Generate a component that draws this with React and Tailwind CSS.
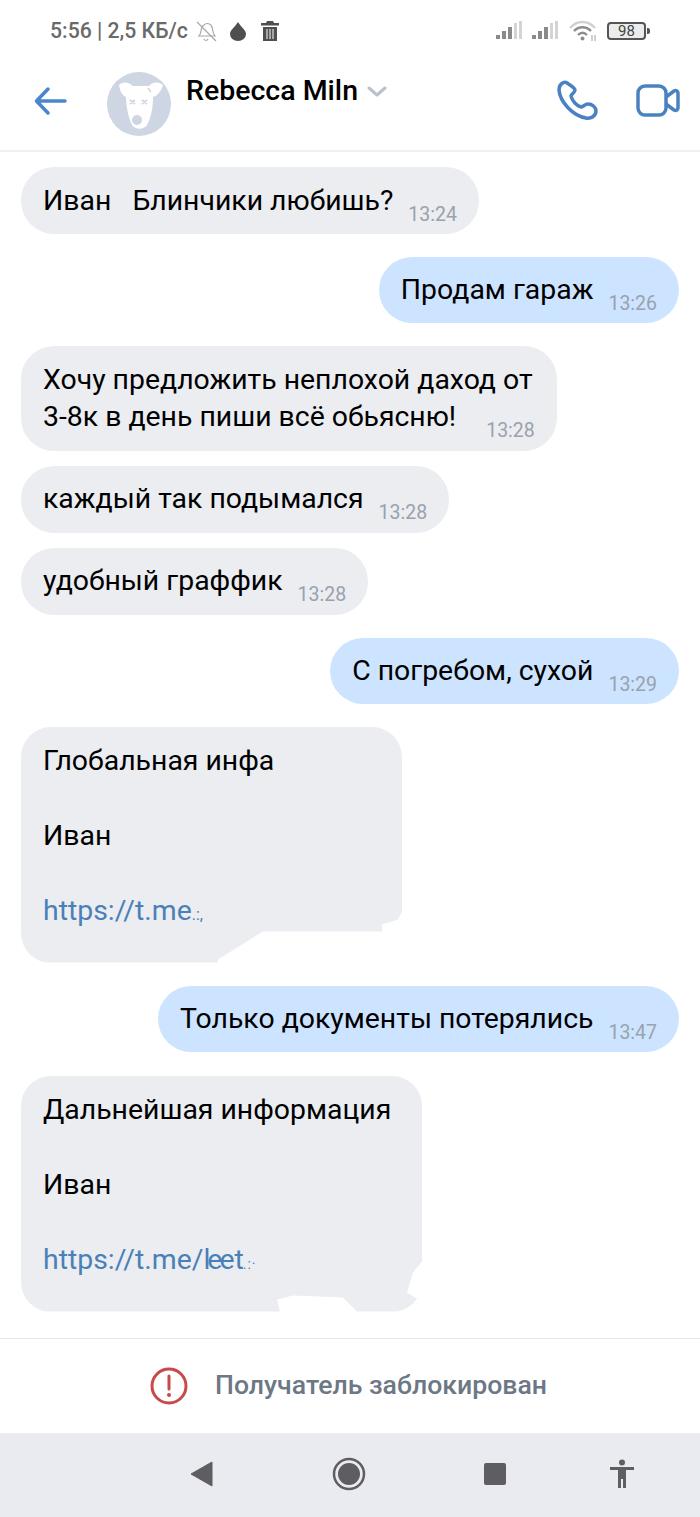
import React from "react";

const Time = ({ gap = "ml-[15px]", children }) => (
  <span className={`${gap} align-[-11px] text-[19.5px] leading-[0] text-[#99a2ad]`}>{children}</span>
);

const Incoming = ({ time, gap, children }) => (
  <div className="self-start whitespace-nowrap rounded-[33px] bg-[#ebedf1] px-[22px] py-[14.75px] text-[28.4px] leading-[37.5px] text-black">
    {children}
    <Time gap={gap}>{time}</Time>
  </div>
);

const Outgoing = ({ time, children }) => (
  <div className="self-end whitespace-nowrap rounded-[33px] bg-[#cce4ff] px-[22px] py-[14.25px] text-[28.4px] leading-[37.5px] text-black">
    {children}
    <Time>{time}</Time>
  </div>
);

const SignalBars = () => (
  <svg width="26" height="20" viewBox="0 0 26 20">
    <rect x="0" y="14" width="4" height="4" fill="#8a8a8a" />
    <rect x="6" y="10" width="4" height="8" fill="#8a8a8a" />
    <rect x="12" y="6" width="4" height="12" fill="#8a8a8a" />
    <rect x="18" y="2" width="3" height="16" fill="#d4d4d4" />
    <rect x="23" y="0" width="3" height="18" fill="#d4d4d4" />
  </svg>
);

const DogAvatar = () => (
  <svg width="64" height="64" viewBox="0 0 64 64">
    <circle cx="32" cy="32" r="32" fill="#cdd6e2" />
    <path
      d="M12 13 C16 9 22 10 26 14 L42 14 C45 10 51 9 56 13 C54 20 50 24 46 25 C46 36 44 46 40 53 C37 58 28 58 25 53 C21 45 19 33 19 25 C15 23 13 19 12 13Z"
      fill="#ffffff"
    />
    <circle cx="30" cy="48" r="5" fill="#cdd6e2" />
    <path d="M23 28 L28 32 M28 28 L23 32 M35 28 L40 32 M40 28 L35 32" stroke="#cdd6e2" strokeWidth="1.8" />
    <path d="M41 16 L44 20" stroke="#cdd6e2" strokeWidth="1.5" />
  </svg>
);

export default function App() {
  return (
    <div className="flex h-[1517px] w-[700px] flex-col overflow-hidden bg-white font-['Roboto',sans-serif]">
      {/* Status bar */}
      <div className="flex h-[62px] items-center pl-[50px] pr-[50px]">
        <span className="text-[21.200px] font-medium text-[#6a6a6a]">5:56 | 2,5 КБ/с</span>
        <svg className="ml-[6px]" width="24" height="24" viewBox="0 0 24 24" fill="none" stroke="#a8a8a8" strokeWidth="1.2">
          <path d="M5 17 C8 14 6 8 10 6 C13 3 17 5 18 8 C19 12 19 15 21 17 Z" />
          <path d="M10 20 C11 22 13 22 14 20 M3 3 L22 22" />
        </svg>
        <svg className="ml-[11px]" width="18" height="20" viewBox="0 0 18 20">
          <path d="M9 1 C12 6 17 9 17 13 A8 7 0 0 1 1 13 C1 9 6 6 9 1Z" fill="#4f4f4f" />
        </svg>
        <svg className="ml-[14px]" width="18" height="20" viewBox="0 0 18 20">
          <path d="M6 0 H12 L13 2 H18 V4.500 H0 V2 H5 Z M2 6 H16 V20 H2 Z" fill="#4f4f4f" />
          <path d="M6 8 V18 M9 8 V18 M12 8 V18" stroke="#ffffff" strokeWidth="1" />
        </svg>
        <div className="ml-auto flex items-center gap-[10px]">
          <SignalBars />
          <SignalBars />
          <svg className="ml-[1px]" width="28" height="22" viewBox="0 0 28 22" fill="none">
            <path d="M1 8 C8 0 19 0 26 8" stroke="#d0d0d0" strokeWidth="2.4" />
            <path d="M5 11 C10 6 17 6 22 11" stroke="#8c8c8c" strokeWidth="2.4" />
            <path d="M9 15 C12 12 15 12 18 15" stroke="#8c8c8c" strokeWidth="2.4" />
            <circle cx="13.500" cy="18.500" r="2" fill="#8c8c8c" />
            <path d="M23 15 V21 M26 15 V21" stroke="#a0a0a0" strokeWidth="1" />
          </svg>
          <div className="flex items-center">
            <div className="flex h-[18px] w-[39px] items-center justify-center rounded-[4px] border-2 border-[#555555] bg-[#ececec] text-[15px] leading-none text-[#444444]">
              98
            </div>
            <div className="ml-[1px] h-[6px] w-[3px] rounded-r-[2px] bg-[#555555]" />
          </div>
        </div>
      </div>

      {/* Header */}
      <div className="flex h-[90px] items-start border-b-2 border-[#f0f0f0]">
        <svg className="ml-[33px] mt-[23px]" width="34" height="32" viewBox="0 0 34 32" fill="none" stroke="#4a86cc" strokeWidth="3.5" strokeLinecap="round" strokeLinejoin="round">
          <path d="M32 16 H4 M15 4 L3.500 16 L15 28" />
        </svg>
        <div className="ml-[40px] mt-[10px]">
          <DogAvatar />
        </div>
        <span className="ml-[15px] mt-[10px] text-[28.500px] font-medium leading-[38px] text-black">Rebecca Miln</span>
        <svg className="ml-[9px] mt-[24px]" width="20" height="12" viewBox="0 0 20 12" fill="none" stroke="#b8c1cc" strokeWidth="3" strokeLinecap="round" strokeLinejoin="round">
          <path d="M2 2 L10 9 L18 2" />
        </svg>
        <svg className="ml-auto mt-[18px]" width="41" height="41" viewBox="0 0 41 41" fill="none" stroke="#4a82c1" strokeWidth="3.500" strokeLinejoin="round">
          <path d="M10 3 C7 1 2 4 2 10 C3 22 16 36 29 38 C34 39 39 36 39 31 C39 27 35 24 31 24 C28 24 26 27 24 27 C20 26 15 21 14 16 C14 14 18 13 18 10 C18 8 13 5 10 3Z" />
        </svg>
        <svg className="ml-[38px] mr-[20px] mt-[22px]" width="44" height="33" viewBox="0 0 44 33" fill="none" stroke="#4a82c1" strokeWidth="3.500" strokeLinejoin="round">
          <rect x="2" y="2" width="28" height="29" rx="7" />
          <path d="M30 13 L38 7 C40 6 42 7 42 9 V24 C42 26 40 27 38 26 L30 20" />
        </svg>
      </div>

      {/* Messages */}
      <div className="flex flex-1 flex-col px-[21px] pt-[15px]">
        <Incoming time="13:24">Иван&nbsp;&nbsp; Блинчики любишь?</Incoming>
        <div className="mt-[23px] flex flex-col">
          <Outgoing time="13:26">Продам гараж</Outgoing>
        </div>
        <div className="mt-[23px] flex flex-col gap-[15px]">
          <Incoming time="13:28" gap="ml-[30px]">
            Хочу предложить неплохой даход от
            <br />
            3-8к в день пиши всё обьясню!
          </Incoming>
          <Incoming time="13:28">каждый так подымался</Incoming>
          <Incoming time="13:28">удобный граффик</Incoming>
        </div>
        <div className="mt-[23px] flex flex-col">
          <Outgoing time="13:29">С погребом, сухой</Outgoing>
        </div>
        <div className="mt-[23px] h-[236px] w-[381px] rounded-[30px] bg-[#ebedf1] px-[22px] pt-[15.5px] text-[28.4px] leading-[37.5px] text-black [clip-path:polygon(0_0,381px_0,381px_185px,377px_193px,361px_198px,361px_205px,242px_205px,197px_233px,197px_236px,0_236px)]">
          Глобальная инфа
          <br />
          <br />
          Иван
          <br />
          <br />
          <span className="text-[#4a80b8]">
            https://t.me<span className="text-[16px]">.:,</span>
          </span>
        </div>
        <div className="mt-[23px] flex flex-col">
          <Outgoing time="13:47">Только документы потерялись</Outgoing>
        </div>
        <div className="mt-[24px] h-[236px] w-[401px] rounded-[30px] bg-[#ebedf1] px-[22px] pt-[15.5px] text-[28.4px] leading-[37.5px] text-black [clip-path:polygon(0_0,401px_0,401px_186px,392px_197px,386px_217px,394px_222px,401px_224px,401px_236px,336px_236px,322px_222px,272px_220px,256px_224px,259px_236px,0_236px)]">
          Дальнейшая информация
          <br />
          <br />
          Иван
          <br />
          <br />
          <span className="text-[#4a80b8]">
            https://t.me/<span className="tracking-[-3px]">lee</span>
            <span className="ml-[3px] tracking-[-1px]">t</span>
            <span className="text-[14px] tracking-[1px]">.:·</span>
          </span>
        </div>
      </div>

      {/* Blocked notice */}
      <div className="flex h-[95px] items-center border-t border-[#e7e8ec] pl-[150px]">
        <svg width="38" height="38" viewBox="0 0 38 38" fill="none">
          <circle cx="19" cy="19" r="17" stroke="#c8494a" strokeWidth="3" />
          <path d="M19 9 V22" stroke="#c8494a" strokeWidth="3" strokeLinecap="round" />
          <circle cx="19" cy="28" r="2" fill="#c8494a" />
        </svg>
        <span className="ml-[27px] text-[26.650px] font-medium text-[#6d7885]">Получатель заблокирован</span>
      </div>

      {/* Android nav bar */}
      <div className="flex h-[84px] items-center bg-[#e9ebf0] pb-[2px] text-[#5e5e62]">
        <svg className="ml-[190px]" width="24" height="26" viewBox="0 0 24 26">
          <path d="M22 1 V25 L1 13 Z" fill="#5e5e62" stroke="#5e5e62" strokeLinejoin="round" />
        </svg>
        <svg className="ml-[118px]" width="34" height="34" viewBox="0 0 34 34" fill="none">
          <circle cx="17" cy="17" r="15" stroke="#5e5e62" strokeWidth="2.500" />
          <circle cx="17" cy="17" r="11" fill="#5e5e62" />
        </svg>
        <div className="ml-[118px] h-[22px] w-[22px] rounded-[2px] bg-[#5e5e62]" />
        <svg className="ml-[102px]" width="28" height="30" viewBox="0 0 28 30">
          <circle cx="14" cy="3.500" r="3" fill="#5e5e62" />
          <path d="M2 8 H26 V11 H18 V29 H15 V20 H13 V29 H10 V11 H2 Z" fill="#5e5e62" />
        </svg>
      </div>
    </div>
  );
}
